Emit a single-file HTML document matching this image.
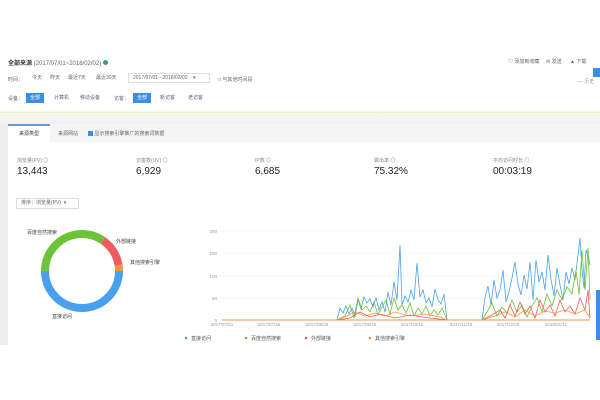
<!DOCTYPE html>
<html><head><meta charset="utf-8"><style>
*{margin:0;padding:0;box-sizing:border-box}
body{width:600px;height:400px;background:#fff;font-family:"Liberation Sans","Noto Sans CJK SC",sans-serif;position:relative;overflow:hidden;color:#333}
.a{position:absolute;white-space:nowrap}
.s{font-size:5px;color:#666}
.btn{position:absolute;font-size:5px;height:10px;line-height:10px;padding:0 4px;color:#666}
.on{background:#3a8ee6;color:#fff}
.lbl{font-size:5px;color:#888}
.num{font-size:10px;color:#222}
</style></head><body>
<div class="a" style="left:8px;top:58px;font-size:6px;font-weight:bold;color:#333">全部来源 <span style="font-weight:normal;color:#666">(2017/07/01~2018/02/02)</span> <span style="display:inline-block;width:5px;height:5px;border-radius:50%;background:#3a9a6a"></span></div>
<div class="a s" style="left:508px;top:58px">♡ 添加到收藏</div>
<div class="a s" style="left:546px;top:58px">✉ 发送</div>
<div class="a s" style="left:570px;top:58px">▲ 下载</div>
<div class="a" style="left:593px;top:68px;width:7px;height:9px;background:#3a8ee6"></div>
<div class="a s" style="left:578px;top:78px;color:#99a">— 历史</div>
<div class="a s" style="left:8px;top:76px">时间：</div>
<div class="btn" style="left:28px;top:73px">今天</div>
<div class="btn" style="left:46px;top:73px">昨天</div>
<div class="btn" style="left:64px;top:73px">最近7天</div>
<div class="btn" style="left:92px;top:73px">最近30天</div>
<div class="a" style="left:128px;top:73px;width:82px;height:10px;border:1px solid #ddd;font-size:5px;color:#666;padding-left:4px;line-height:8px">2017/07/01 - 2018/02/02 &nbsp; &nbsp;▾</div>
<div class="a s" style="left:218px;top:76px">□ 与其他时间段</div>
<div class="a s" style="left:8px;top:95px">设备：</div>
<div class="btn on" style="left:26px;top:93px">全部</div>
<div class="btn" style="left:50px;top:93px">计算机</div>
<div class="btn" style="left:76px;top:93px">移动设备</div>
<div class="a s" style="left:114px;top:95px">访客：</div>
<div class="btn on" style="left:133px;top:93px">全部</div>
<div class="btn" style="left:156px;top:93px">新访客</div>
<div class="btn" style="left:184px;top:93px">老访客</div>
<div class="a" style="left:0;top:110px;width:600px;height:14px;background:linear-gradient(#fbfbf0,#f0f0f0)"></div>
<div class="a" style="left:0;top:112px;width:600px;height:1px;background:#f0f0c8"></div>
<div class="a" style="left:0;top:124px;width:8px;height:221px;background:#eee"></div>
<div class="a" style="left:8px;top:124px;width:592px;height:18px;background:#f5f5f5"></div>
<div class="a" style="left:8px;top:124px;width:42px;height:18px;background:#fff;border-top:2px solid #6c98d0;font-size:5px;color:#333;text-align:center;line-height:16px">来源类型</div>
<div class="a s" style="left:58px;top:130px">来源网站</div>
<div class="a s" style="left:88px;top:130px"><span style="display:inline-block;width:5px;height:5px;background:#3a8ee6;vertical-align:middle"></span> 显示搜索引擎推广的搜索词数据</div>
<div class="a" style="left:8px;top:142px;width:592px;height:203px;background:#fff"></div>
<div class="a lbl" style="left:17px;top:157px">浏览量(PV) ◎</div><div class="a num" style="left:17px;top:166px">13,443</div>
<div class="a lbl" style="left:136px;top:157px">访客数(UV) ◎</div><div class="a num" style="left:136px;top:166px">6,929</div>
<div class="a lbl" style="left:255px;top:157px">IP数 ◎</div><div class="a num" style="left:255px;top:166px">6,685</div>
<div class="a lbl" style="left:374px;top:157px">跳出率 ◎</div><div class="a num" style="left:374px;top:166px">75.32%</div>
<div class="a lbl" style="left:493px;top:157px">平均访问时长 ◎</div><div class="a num" style="left:493px;top:166px">00:03:19</div>
<div class="a" style="left:16px;top:198px;width:63px;height:11px;border:1px solid #ddd;font-size:5px;color:#666;line-height:9px;padding-left:4px">排序：浏览量(PV) &nbsp;▾</div>
<svg class="a" style="left:0;top:0" width="600" height="400">
<g fill="none" stroke-width="8" transform="rotate(0 82 271)">
<circle cx="82" cy="271" r="37" stroke="#4aa0f0" stroke-dasharray="116.2 116.3"/>
<circle cx="82" cy="271" r="37" stroke="#6cc335" stroke-dasharray="0 116.2 80 40" />
<circle cx="82" cy="271" r="37" stroke="#ef5c5c" stroke-dasharray="0 196.2 30 20"/>
<circle cx="82" cy="271" r="37" stroke="#f8943a" stroke-dasharray="0 226.2 6.3 0"/>
</g>
<g font-size="5" fill="#444" font-family="Liberation Sans,Noto Sans CJK SC,sans-serif">
<text x="27" y="234">百度自然搜索</text><text x="116" y="243">外部链接</text><text x="130" y="264">其他搜索引擎</text><text x="52" y="318">直接访问</text>
</g>
<g stroke="#eee" stroke-width="0.6"><line x1="222" y1="231" x2="592" y2="231"/><line x1="222" y1="253" x2="592" y2="253"/><line x1="222" y1="276" x2="592" y2="276"/><line x1="222" y1="298" x2="592" y2="298"/></g>
<g font-size="4.5" fill="#999" font-family="Liberation Sans,sans-serif" text-anchor="end">
<text x="217" y="233">200</text><text x="217" y="255">150</text><text x="217" y="278">100</text><text x="217" y="300">50</text><text x="217" y="322">0</text></g>
<g font-size="4.5" fill="#999" font-family="Liberation Sans,sans-serif" text-anchor="middle">
<text x="222" y="326">2017/07/01</text><text x="269" y="326">2017/07/26</text><text x="317" y="326">2017/08/20</text><text x="365" y="326">2017/09/15</text><text x="412" y="326">2017/10/11</text><text x="461" y="326">2017/11/18</text><text x="508" y="326">2017/12/28</text><text x="556" y="326">2018/01/11</text></g>
<polyline fill="none" stroke="#f8943a" stroke-width="1" points="222,320 590,320"/>
<g fill="none" stroke-width="0.8">
<polyline stroke="#4aa0f0" points="337,320 340,308 343,313 346,306 349,314 352,308 355,316 358,300 361,309 364,297 367,303 370,299 373,307 376,298 379,310 382,302 385,312 388,292 391,305 394,282 397,300 400,245 402,305 405,296 408,302 411,290 414,300 417,263 420,297 423,290 426,303 429,298 432,307 435,289 438,300 441,304 444,294 447,320"/>
<polyline stroke="#4aa0f0" points="482,320 485,297 488,286 491,305 494,280 497,298 500,290 503,270 506,302 509,292 512,278 515,262 518,284 521,295 524,275 527,289 530,262 533,300 536,260 539,282 542,272 545,290 548,255 551,279 554,296 557,268 560,285 563,300 566,272 569,284 572,268 575,280 578,255 580,238 582,270 584,288 586,250 588,255 590,265"/>
<polyline stroke="#6cc335" points="337,320 345,316 350,305 354,318 358,298 362,310 366,306 370,312 374,302 378,315 382,307 386,300 390,314 394,298 398,310 402,305 406,313 410,303 414,316 418,308 422,314 426,306 430,316 434,310 438,315 442,308 447,320"/>
<polyline stroke="#6cc335" points="482,320 487,312 492,303 497,316 502,307 507,313 512,300 517,312 522,305 527,317 532,306 537,298 542,312 547,294 552,306 557,290 562,300 567,287 572,294 576,270 579,295 582,250 585,290 588,248 590,300"/>
<polyline stroke="#ef5c5c" points="337,320 350,318 360,312 370,317 380,314 395,318 410,315 430,318 447,320"/>
<polyline stroke="#ef5c5c" points="482,320 490,316 500,310 505,318 510,305 515,316 520,302 525,314 530,306 535,318 540,300 545,312 550,305 555,316 560,300 565,312 570,306 575,314 580,298 585,310 588,290 590,318"/>
<polyline stroke="#f8943a" points="337,320 345,317 355,312 365,316 375,313 385,316 395,312 410,316 425,314 440,317 447,320"/>
<polyline stroke="#f8943a" points="482,320 495,316 505,312 515,317 525,310 535,316 545,311 555,313 565,310 575,314 585,310 590,318"/>
</g>
<g font-size="5" fill="#555" font-family="Liberation Sans,Noto Sans CJK SC,sans-serif">
<circle cx="186" cy="338" r="1.3" fill="#4aa0f0"/><text x="191" y="340">直接访问</text>
<circle cx="246" cy="338" r="1.3" fill="#6cc335"/><text x="251" y="340">百度自然搜索</text>
<circle cx="306" cy="338" r="1.3" fill="#ef5c5c"/><text x="311" y="340">外部链接</text>
<circle cx="370" cy="338" r="1.3" fill="#f8943a"/><text x="375" y="340">其他搜索引擎</text>
</g>
<rect x="596" y="290" width="4" height="50" fill="#3a8ee6"/>
</svg>
</body></html>
